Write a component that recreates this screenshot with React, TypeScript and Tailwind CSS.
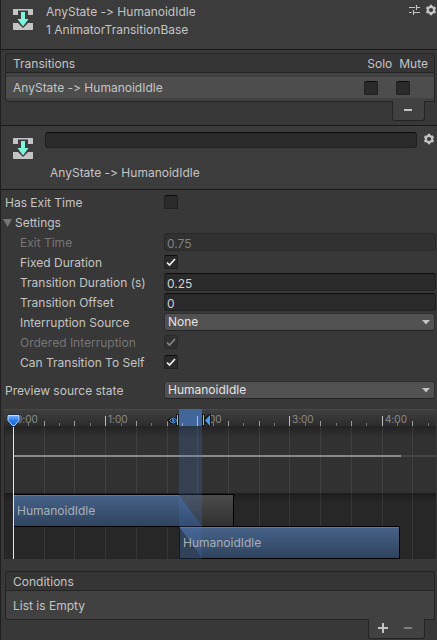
import { useState } from 'react';
import type { ReactNode } from 'react';

function TransitionIcon() {
  return (
    <svg width="22" height="22" viewBox="0 0 22 22" className="block shrink-0" aria-hidden="true">
      <path d="M1.500 1h19l.5.5V7h-5V2.500H6V7H1V1.500zM1 15h5l5 5 5-5h5v6.500l-.5.5h-19l-.5-.5z" fill="#c4c4c4" />
      <path d="M9 4h4v7h3.500L11 18.500 5.500 11H9z" fill="#7df5dc" />
    </svg>
  );
}

function GearIcon() {
  return (
    <svg width="12" height="12" viewBox="0 0 12 12" className="block" aria-hidden="true">
      <circle cx="6" cy="6" r="3.200" fill="none" stroke="#c4c4c4" strokeWidth="2.200" />
      <g stroke="#c4c4c4" strokeWidth="2.400">
        <path d="M6 .8v1.600M6 9.600v1.600M1.500 3.400l1.400.8M9.100 7.800l1.400.8M1.500 8.600l1.400-.8M9.100 4.200l1.400-.8" />
      </g>
    </svg>
  );
}

function PresetIcon() {
  return (
    <svg width="11" height="10" viewBox="0 0 11 10" className="block" aria-hidden="true">
      <path d="M0 2.500h6M7 2.500h4M7.500 0v5M0 7.500h2.500M4 7.500h7M4.500 5v5" fill="none" stroke="#c4c4c4" strokeWidth="1.200" />
    </svg>
  );
}

type CheckProps = { id?: string; label?: string; initial?: boolean; disabled?: boolean };

function Check({ id, label, initial = false, disabled = false }: CheckProps) {
  const [on, setOn] = useState(initial);
  return (
    <span className="relative block size-3.5 shrink-0">
      <input
        id={id}
        type="checkbox"
        aria-label={label}
        checked={on}
        disabled={disabled}
        onChange={(e) => setOn(e.target.checked)}
        className="block size-3.5 appearance-none rounded-[2px] border border-[#212121] border-t-[#0d0d0d] bg-[#2a2a2a] disabled:border-[#2a2a2a] disabled:bg-[#303030]"
      />
      {on && (
        <svg width="14" height="14" viewBox="0 0 14 14" className="pointer-events-none absolute inset-0" aria-hidden="true">
          <path d="M3 7.500L5.500 10l5.500-6" fill="none" stroke={disabled ? '#868686' : '#f0f0f0'} strokeWidth="1.700" />
        </svg>
      )}
    </span>
  );
}

type RowProps = { id: string; label: string; indent?: boolean; disabled?: boolean; children: ReactNode };

function Row({ id, label, indent = false, disabled = false, children }: RowProps) {
  return (
    <div className="flex h-[18px] items-center">
      <label
        htmlFor={id}
        className={`w-[163px] shrink-0 pt-0.5 whitespace-nowrap ${indent ? 'pl-[19px]' : 'pl-1'} ${disabled ? 'text-[#757575]' : ''}`}
      >
        {label}
      </label>
      {children}
    </div>
  );
}

function Field({ id, value, disabled = false }: { id: string; value: string; disabled?: boolean }) {
  return (
    <input
      id={id}
      type="text"
      defaultValue={value}
      disabled={disabled}
      className="h-[18px] min-w-0 flex-1 rounded-[3px] border border-[#212121] border-t-[#0d0d0d] bg-[#2a2a2a] px-0.5 pt-0.5 leading-[14px] text-[#d2d2d2] disabled:border-[#282828] disabled:bg-[#313131] disabled:text-[#808080]"
    />
  );
}

function Dropdown({ id, options }: { id: string; options: string[] }) {
  return (
    <span className="relative mr-px flex h-[18px] min-w-0 flex-1">
      <select
        id={id}
        className="h-[18px] w-full appearance-none rounded-[3px] border border-[#303030] border-b-[#242424] bg-[#515151] pr-5 pl-[3px] leading-4 text-[#e4e4e4]"
      >
        {options.map((o) => (
          <option key={o}>{o}</option>
        ))}
      </select>
      <svg width="8" height="5" viewBox="0 0 8 5" className="pointer-events-none absolute top-[7px] right-[5px]" aria-hidden="true">
        <path d="M0 0h8L4 4.500z" fill="#c4c4c4" />
      </svg>
    </span>
  );
}

const STEP = 15.36;
const ORIGIN = 9;
const ticks = Array.from({ length: 28 }, (_, i) => ({ i, x: Math.round(ORIGIN + i * STEP) }));

function Timeline() {
  return (
    <svg width="100%" height="150" className="block" role="img" aria-label="Transition timeline">
      <defs>
        <linearGradient id="ruler" x1="0" y1="0" x2="0" y2="1">
          <stop offset="0" stopColor="#404040" />
          <stop offset="1" stopColor="#2c2c2c" />
        </linearGradient>
        <linearGradient id="upper" x1="0" y1="0" x2="0" y2="1">
          <stop offset="0" stopColor="#232323" />
          <stop offset=".17" stopColor="#313131" />
          <stop offset="1" stopColor="#313131" />
        </linearGradient>
        <linearGradient id="lower" x1="0" y1="0" x2="0" y2="1">
          <stop offset="0" stopColor="#1c1c1c" />
          <stop offset=".14" stopColor="#272727" />
          <stop offset="1" stopColor="#272727" />
        </linearGradient>
        <linearGradient id="clip" x1="0" y1="0" x2="0" y2="1">
          <stop offset="0" stopColor="#476389" />
          <stop offset="1" stopColor="#2f435e" />
        </linearGradient>
        <linearGradient id="tail" x1="0" y1="0" x2="0" y2="1">
          <stop offset="0" stopColor="#4c4c4c" />
          <stop offset="1" stopColor="#303030" />
        </linearGradient>
        <linearGradient id="pin" x1="0" y1="0" x2="0" y2="1">
          <stop offset="0" stopColor="#7fb2ff" />
          <stop offset=".5" stopColor="#2a7bea" />
          <stop offset="1" stopColor="#1b66d6" />
        </linearGradient>
      </defs>

      <rect width="100%" height="17" fill="url(#ruler)" />
      <rect width="100%" height="1" fill="#484848" />
      <rect y="17" width="100%" height="67" fill="url(#upper)" />
      <rect y="84" width="100%" height="66" fill="url(#lower)" />
      <rect y="17" width="1" height="133" fill="#222222" />

      {ticks.map(({ i, x }) => {
        const major = i % 6 === 0;
        const medium = i % 2 === 0;
        const top = major ? 7 : medium ? 12 : 14;
        return (
          <g key={i}>
            {medium && <rect x={x} y="17" width="1" height="133" fill="#ffffff" fillOpacity=".08" />}
            <rect x={x} y={top} width="1" height={17 - top} fill={major ? '#bdbdbd' : medium ? '#9a9a9a' : '#727272'} />
          </g>
        );
      })}
      <g fill="#8b8b8b" fontSize="10">
        {['0:00', '1:00', '2:00', '3:00', '4:00'].map((t, n) => (
          <text key={t} x={ticks[n * 6].x + 3} y="14">
            {t}
          </text>
        ))}
      </g>

      <rect x="9" y="46" width="100%" height="2" fill="#464646" />
      <rect x="9" y="46" width="388" height="2" fill="#8a8a8a" />

      <rect x="9" y="85" width="221" height="33" fill="#000000" />
      <rect x="10" y="86" width="219" height="31" fill="url(#tail)" />
      <path d="M10 86h165l23 31H10z" fill="url(#clip)" />
      <path d="M10 86.500h165" stroke="#5b789f" />
      <rect x="175" y="117" width="221" height="33" fill="#000000" />
      <rect x="176" y="118" width="219" height="31" fill="url(#clip)" />
      <path d="M176 118.500h219" stroke="#5b789f" />
      <path d="M176 119v30h22z" fill="#2c323b" />

      <rect x="175" y="17" width="23" height="133" fill="#4678c4" fillOpacity=".22" />
      <rect x="175" width="23" height="17" fill="#42659c" />
      <rect x="193" y="7" width="1" height="10" fill="#a8bedc" />
      <rect x="178" y="14" width="1" height="3" fill="#8ea8cf" />

      <g fill="#a9afb8" fontSize="12">
        <text x="13" y="106">HumanoidIdle</text>
        <text x="179" y="138">HumanoidIdle</text>
      </g>

      <path d="M165 11.500q4.500-4.500 8 0q-3.500 4.500-8 0zM173.500 5v12" fill="none" stroke="#101820" strokeWidth="3" />
      <path d="M165.500 11.500q4-5 7.500 0q-3.500 5-7.500 0z" fill="#16263c" stroke="#62a0ea" />
      <circle cx="169.300" cy="11.500" r="1.200" fill="#62a0ea" />
      <path d="M173.500 6v10" stroke="#8fc0f8" />
      <path d="M198 5h3v3l4-3h2v12h-2l-4-3v3h-3z" fill="#101820" />
      <path d="M199.500 6v10" stroke="#8fc0f8" />
      <path d="M206 6v11l-5-5.500z" fill="#4f97f2" />

      <rect x="9" y="17" width="1" height="133" fill="#e6e6e6" />
      <path d="M4 6.500h11v5L10.500 17h-2L4 11.500z" fill="url(#pin)" stroke="#14284a" strokeWidth="2" />
      <path d="M4 6.500h11v5l-4.500 5h-2L4 11.500z" fill="url(#pin)" stroke="#c3dcff" strokeWidth="1" />
    </svg>
  );
}

export default function App() {
  const [open, setOpen] = useState(true);
  return (
    <main className="min-h-screen overflow-hidden border-l border-[#1f1f1f] bg-[#383838] font-['Inter',sans-serif] text-[12px] leading-[18px] text-[#c4c4c4] [font-variant-ligatures:none]">
      <header className="flex h-[50px] border-b border-[#1a1a1a] bg-[#3c3c3c] pt-[3px] pl-[11px]">
        <div className="pt-[5px]">
          <TransitionIcon />
        </div>
        <div className="ml-3 flex-1">
          <h1>AnyState -&gt; HumanoidIdle</h1>
          <p>1 AnimatorTransitionBase</p>
        </div>
        <div className="flex h-[14px] items-center gap-[5px]">
          <button type="button" aria-label="Presets">
            <PresetIcon />
          </button>
          <button type="button" aria-label="Options">
            <GearIcon />
          </button>
        </div>
      </header>

      <section className="mt-[3px] mr-0.5 ml-1">
        <div className="flex h-5 items-center rounded-t-[3px] border border-[#242424] bg-[#353535] pt-0.5 pr-1.5 pl-[7px]">
          <h2 className="flex-1">Transitions</h2>
          <span className="w-8">Solo</span>
          <span>Mute</span>
        </div>
        <div className="h-[29px] rounded-bl-[3px] border border-t-0 border-[#242424] bg-[#414141] pt-1">
          <div className="flex h-[21px] items-center bg-[#4d4d4d] pl-[7px]">
            <span className="flex-1">AnyState -&gt; HumanoidIdle</span>
            <span className="flex gap-[18px] pr-6">
              <Check label="Solo AnyState -> HumanoidIdle" />
              <Check label="Mute AnyState -> HumanoidIdle" />
            </span>
          </div>
        </div>
        <div className="-mt-px mr-[10px] ml-auto flex h-5 w-[33px] items-start justify-end rounded-b-[3px] border border-t-0 border-[#242424] bg-[#414141] px-2 pt-1">
          <button type="button" aria-label="Remove transition" className="p-1">
            <span className="block h-0.5 w-2 bg-[#c4c4c4]" />
          </button>
        </div>
      </section>

      <header className="mt-1 flex h-[65px] border-y border-[#1a1a1a] bg-[#3c3c3c] pl-[11px]">
        <div className="pt-[11px]">
          <TransitionIcon />
        </div>
        <div className="ml-[11px] flex-1 pt-1.5">
          <input
            type="text"
            aria-label="Transition name"
            className="block h-4 w-full rounded-[3px] border border-[#212121] border-t-[#0d0d0d] bg-[#2a2a2a] px-0.5"
          />
          <p className="mt-4 pl-[5px]">AnyState -&gt; HumanoidIdle</p>
        </div>
        <button type="button" aria-label="Transition options" className="mt-[7px] mr-0.5 ml-1.5 h-3">
          <GearIcon />
        </button>
      </header>

      <section className="flex flex-col gap-0.5 pt-[3px] pr-px">
        <Row id="exit" label="Has Exit Time">
          <Check id="exit" />
        </Row>
        <button type="button" aria-expanded={open} onClick={() => setOpen(!open)} className="flex h-[18px] items-center gap-[3px] pt-0.5 pl-0.5">
          <svg width="9" height="8" viewBox="0 0 9 8" aria-hidden="true">
            <path d="M0 0h9L4.500 8z" fill="#757575" />
          </svg>
          Settings
        </button>
        {open && (
          <>
            <Row id="exit-time" label="Exit Time" indent disabled>
              <Field id="exit-time" value="0.75" disabled />
            </Row>
            <Row id="fixed" label="Fixed Duration" indent>
              <Check id="fixed" initial />
            </Row>
            <Row id="duration" label="Transition Duration (s)" indent>
              <Field id="duration" value="0.25" />
            </Row>
            <Row id="offset" label="Transition Offset" indent>
              <Field id="offset" value="0" />
            </Row>
            <Row id="source" label="Interruption Source" indent>
              <Dropdown id="source" options={['None', 'Current State', 'Next State']} />
            </Row>
            <Row id="ordered" label="Ordered Interruption" indent disabled>
              <Check id="ordered" initial disabled />
            </Row>
            <Row id="self" label="Can Transition To Self" indent>
              <Check id="self" initial />
            </Row>
          </>
        )}
        <div className="mt-2">
          <Row id="preview" label="Preview source state">
            <Dropdown id="preview" options={['HumanoidIdle']} />
          </Row>
        </div>
      </section>

      <div className="mt-[10px] mr-px ml-[3px]">
        <Timeline />
      </div>

      <section className="mt-3 mr-0.5 ml-1">
        <div className="flex h-5 items-center rounded-t-[3px] border border-[#242424] bg-[#353535] pt-0.5 pl-[7px]">
          <h2>Conditions</h2>
        </div>
        <div className="flex h-[29px] items-center rounded-bl-[3px] border border-t-0 border-[#242424] bg-[#414141] pt-0.5 pl-[7px]">List is Empty</div>
        <div className="-mt-px mr-[10px] ml-auto flex h-5 w-[57px] items-start justify-between rounded-b-[3px] border border-t-0 border-[#242424] bg-[#414141] px-2 pt-1">
          <button type="button" aria-label="Add condition" className="px-px">
            <svg width="10" height="10" viewBox="0 0 10 10" className="block" aria-hidden="true">
              <path d="M0 5h10M5 0v10" stroke="#c4c4c4" strokeWidth="2" />
            </svg>
          </button>
          <button type="button" aria-label="Remove condition" className="p-1" disabled>
            <span className="block h-0.5 w-2 bg-[#7d7d7d]" />
          </button>
        </div>
      </section>
    </main>
  );
}
